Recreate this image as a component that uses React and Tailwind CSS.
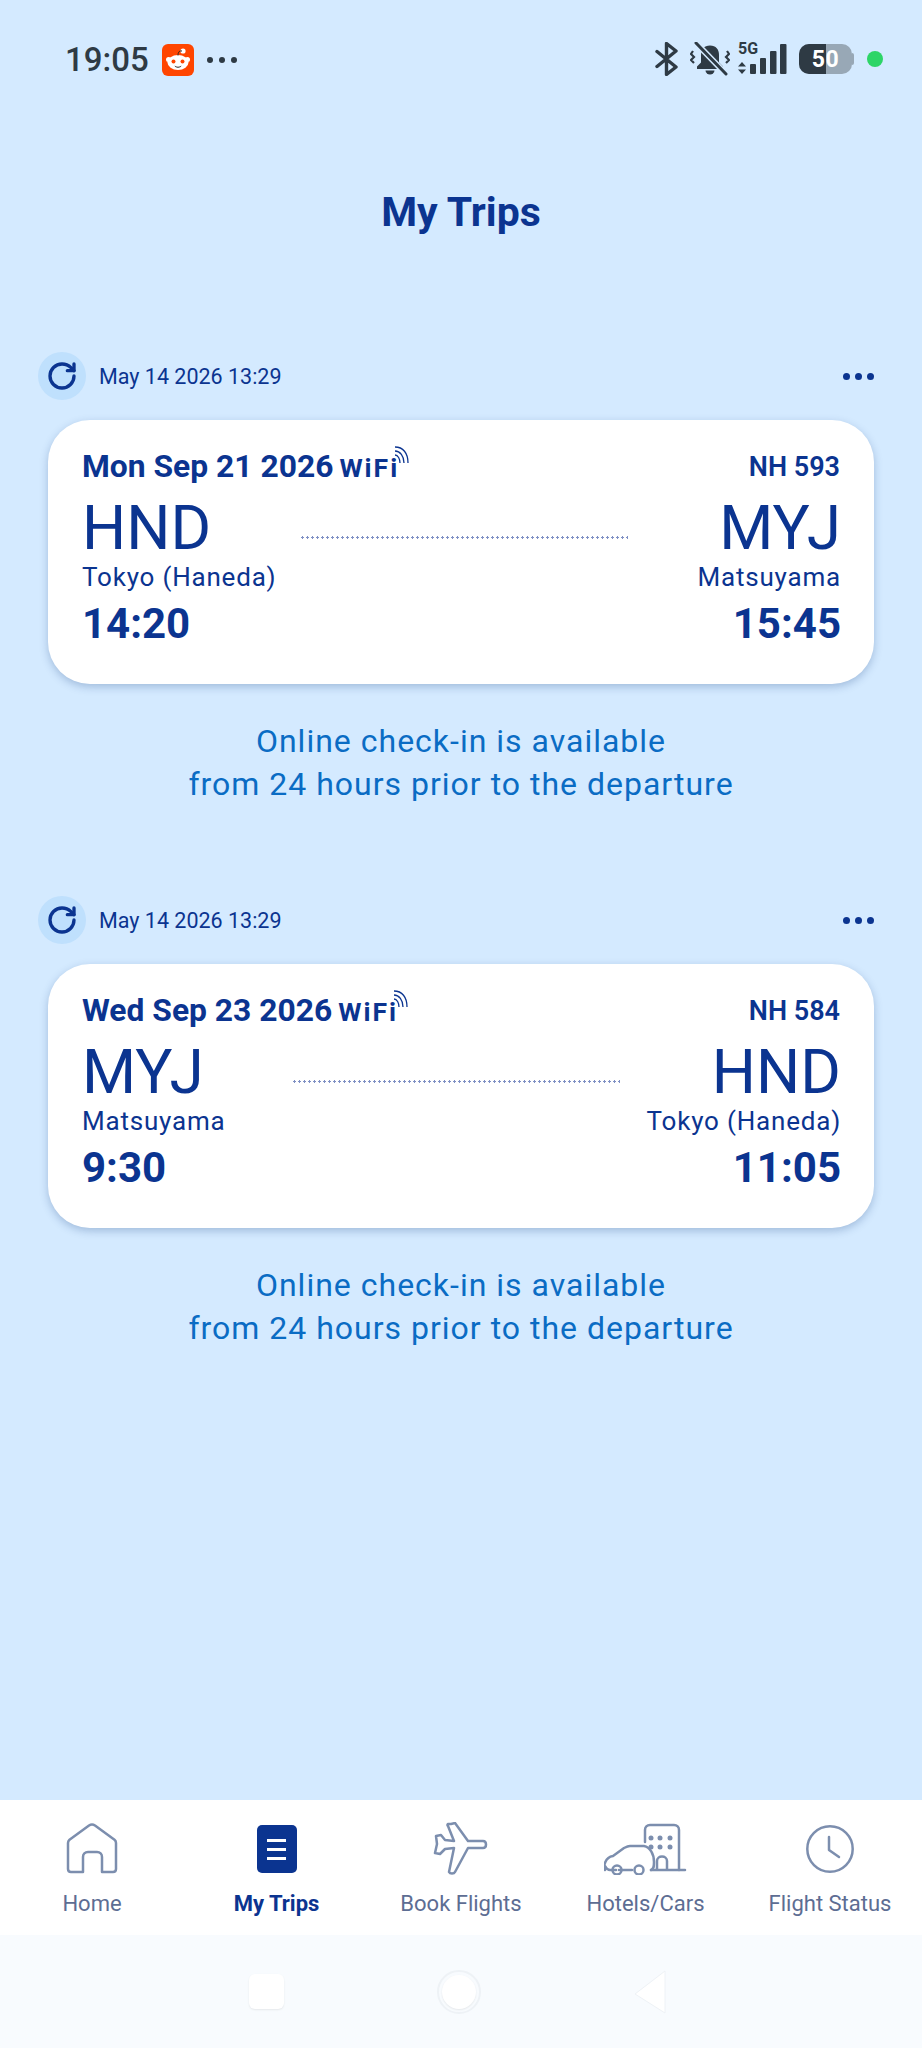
import { RotateCw } from 'lucide-react';

const TRIPS = [
  {
    date: 'Mon Sep 21 2026', flight: 'NH 593',
    from: 'HND', fromCity: 'Tokyo (Haneda)', dep: '14:20',
    to: 'MYJ', toCity: 'Matsuyama', arr: '15:45', lineClass: 'ml-[24px]',
  },
  {
    date: 'Wed Sep 23 2026', flight: 'NH 584',
    from: 'MYJ', fromCity: 'Matsuyama', dep: '9:30',
    to: 'HND', toCity: 'Tokyo (Haneda)', arr: '11:05', lineClass: 'ml-[66px]',
  },
];

const RedditIcon = () => (
  <svg width="32" height="32" viewBox="0 0 32 32">
    <rect width="32" height="32" rx="6" fill="#ff4500" />
    <ellipse cx="16" cy="18.500" rx="10.500" ry="7.500" fill="#fff" />
    <circle cx="6.500" cy="15.500" r="2.500" fill="#fff" />
    <circle cx="25.500" cy="15.500" r="2.500" fill="#fff" />
    <circle cx="21" cy="7" r="2.600" fill="#fff" />
    <path d="M16 11.500c0-3 1-5 4-4.500" stroke="#222" strokeWidth="1" fill="none" />
    <circle cx="11.500" cy="17.500" r="2" fill="#ff4500" />
    <circle cx="20.500" cy="17.500" r="2" fill="#ff4500" />
    <path d="M12.500 21.500c2 1.600 5 1.600 7 0-1 3-6 3-7 0z" fill="#222" />
  </svg>
);

const StatusIcons = () => (
  <div className="mb-[4px] flex items-center">
    <svg width="24" height="34" viewBox="0 0 24 34" fill="none" stroke="#2e3a44" strokeWidth="3.400" strokeLinecap="round" strokeLinejoin="round">
      <path d="M2 9.500l19 15.500-9.500 7.500V1.500L21 9 2 24.500" />
    </svg>
    <svg className="ml-[11px]" width="40" height="34" viewBox="0 0 40 34">
      <path d="M20 3.500c-6 0-9 4-9 9.500v7.500l-4 4v2.500h26v-2.500l-4-4V13c0-5.500-3-9.500-9-9.500z" fill="#2e3a44" />
      <path d="M15.500 28.500h9a4.500 4 0 0 1-9 0z" fill="#2e3a44" />
      <path d="M6 1l30 31" stroke="#d4eaff" strokeWidth="6" />
      <path d="M6 1l30 31" stroke="#2e3a44" strokeWidth="3" strokeLinecap="round" />
      <path d="M3 9l-2 3 3 3-3 3 3 3M37 9l2 3-3 3 3 3-3 3" stroke="#2e3a44" strokeWidth="2.200" fill="none" />
    </svg>
    <div className="relative ml-[8px] h-[32px] w-[49px]">
      <span className="absolute left-0 top-[-1px] text-[16px] font-bold leading-[14px] text-[#2e3a44]">5G</span>
      <svg className="absolute inset-0" width="49" height="32" viewBox="0 0 49 32" fill="#2e3a44">
        <path d="M4 19l4 4.500H0zM4 31l-4-4.500h8z" />
        <rect x="12" y="21" width="6" height="10" rx="1" />
        <rect x="22" y="15" width="6" height="16" rx="1" />
        <rect x="32" y="8" width="6.500" height="23" rx="1" />
        <rect x="42" y="1" width="6.500" height="30" rx="1" />
      </svg>
    </div>
    <div className="relative ml-[12px] flex h-[30px] w-[53px] items-center justify-center overflow-hidden rounded-[10px] bg-[#98a8b6]">
      <div className="absolute inset-y-0 left-0 w-[27px] bg-[#2e3a44]" />
      <span className="relative text-[23px] font-bold leading-none tracking-[0.5px] text-white">50</span>
    </div>
    <div className="h-[12px] w-[2px] rounded-r-sm bg-[#98a8b6]" />
    <div className="ml-[13px] h-4 w-4 rounded-full bg-[#2dd567]" />
  </div>
);

const TripCard = ({ trip }) => (
  <div>
    <div className="flex h-12 items-center pl-[38px] pr-12">
      <div className="flex h-12 w-12 items-center justify-center rounded-full bg-[#bfe0fd]">
        <RotateCw size={32} strokeWidth={2.500} className="text-[#0b3490]" />
      </div>
      <span className="ml-[13px] mt-[3px] text-[21.500px] text-[#0b3490]">May 14 2026 13:29</span>
      <div className="ml-auto flex gap-[5px]">
        <div className="h-[7px] w-[7px] rounded-full bg-[#0b3490]" />
        <div className="h-[7px] w-[7px] rounded-full bg-[#0b3490]" />
        <div className="h-[7px] w-[7px] rounded-full bg-[#0b3490]" />
      </div>
    </div>
    <div className="mx-12 mt-5 h-[264px] rounded-[42px] bg-white px-[34px] pt-[31px] text-[#0b3490] shadow-[0_3px_8px_rgba(30,70,130,0.28)]">
      <div className="flex h-[32px] items-center justify-between">
        <div className="flex items-baseline">
          <span className="text-[31.800px] font-bold leading-[32px]">{trip.date}</span>
          <span className="relative ml-[6px] text-[26.500px] font-bold leading-[32px] tracking-[2px]">
            WiFi
            <svg className="absolute -right-[10px] -top-[6px]" width="15" height="18" viewBox="0 0 15 18" fill="none" stroke="#0b3490" strokeWidth="1.300">
              <path d="M1 1c8 0 13 6 13 16M1 5c5 0 9 5 9 12M1 9c3 0 5 4 5 8" />
            </svg>
          </span>
        </div>
        <span className="text-[27px] font-semibold">{trip.flight}</span>
      </div>
      <div className="mt-[11px] flex items-start">
        <div className="flex flex-col">
          <span className="text-[62px] leading-[68px]">{trip.from}</span>
          <span className="text-[26px] leading-[30px] tracking-[0.800px]">{trip.fromCity}</span>
          <span className="mt-[8px] text-[42px] font-bold leading-[48px]">{trip.dep}</span>
        </div>
        <div className={`mt-[42px] h-[3px] w-[328px] shrink-0 bg-[radial-gradient(circle,#7f90c4_1px,transparent_1.300px)] bg-[length:5px_3px] ${trip.lineClass}`} />
        <div className="-mr-[1px] flex flex-1 flex-col items-end">
          <span className="text-[62px] leading-[68px]">{trip.to}</span>
          <span className="text-[26px] leading-[30px] tracking-[0.800px]">{trip.toCity}</span>
          <span className="mt-[8px] text-[42px] font-bold leading-[48px]">{trip.arr}</span>
        </div>
      </div>
    </div>
    <div className="mt-[36px] text-center text-[32px] leading-[43px] tracking-[1px] text-[#0a6cc4]">
      <p>Online check-in is available</p>
      <p>from 24 hours prior to the departure</p>
    </div>
  </div>
);

const NavItem = ({ icon, label, active }) => (
  <div className="flex w-[184px] flex-col items-center">
    <div className="flex h-[54px] items-center justify-center">{icon}</div>
    <span className={`mt-[13px] text-[22px] leading-[30px] ${active ? 'font-bold text-[#0b3490]' : 'text-[#5d6d93]'}`}>{label}</span>
  </div>
);

const navStroke = { fill: 'none', stroke: '#7c8eae', strokeWidth: 2.500, strokeLinecap: 'round', strokeLinejoin: 'round' };

const NAV = [
  {
    label: 'Home',
    icon: (
      <svg width="52" height="52" viewBox="0 0 52 52" {...navStroke}>
        <path d="M2 20c0-1.500.6-2.500 1.500-3.300L23 2.500c2-1.300 4-1.300 6 0l19.500 14.200c1 .8 1.500 1.800 1.500 3.300v26c0 2-1 3-3 3H36V34c0-3-2-5-5-5h-9c-3 0-5 2-5 5v15H5c-2 0-3-1-3-3z" />
      </svg>
    ),
  },
  {
    label: 'My Trips',
    active: true,
    icon: (
      <div className="flex h-12 w-10 flex-col items-center justify-center gap-[6px] rounded-[5px] bg-[#0b3490]">
        <div className="h-[3px] w-[19px] bg-white" />
        <div className="h-[3px] w-[19px] bg-white" />
        <div className="h-[3px] w-[19px] bg-white" />
      </div>
    ),
  },
  {
    label: 'Book Flights',
    icon: (
      <svg width="56" height="54" viewBox="0 0 56 54" {...navStroke}>
        <path d="M18 2l4-1 13 18h15c4 0 4 7 0 7H35L22 50c-1 2-5 2-6 0l5-24-9 1-5 5-5-1 2-9-1-8 5-1 4 5 9 1-6-15c-1-1-1-1 0-2z" />
      </svg>
    ),
  },
  {
    label: 'Hotels/Cars',
    icon: (
      <svg width="84" height="52" viewBox="0 0 84 52" {...navStroke}>
        <path d="M41 19V7c0-3 2-5 5-5h24c3 0 5 2 5 5v40" />
        <path d="M1 47c-2-3 0-13 8-14l11-8c2-1 4-2 6-2h14c6 1 10 8 10 16 0 4 0 7-3 8M15 47h13M12 47H6c-3 0-4-2-5-4" />
        <circle cx="13" cy="47" r="4.500" />
        <circle cx="35" cy="47" r="4.500" />
        <path d="M47 47h34M53 47v-9c0-6 10-6 10 0v9" />
        <g fill="#7c8eae" stroke="none">
          <circle cx="47" cy="15" r="2.500" /><circle cx="56" cy="15" r="2.500" /><circle cx="66" cy="15" r="2.500" />
          <circle cx="47" cy="24" r="2.500" /><circle cx="56" cy="24" r="2.500" /><circle cx="66" cy="24" r="2.500" />
        </g>
      </svg>
    ),
  },
  {
    label: 'Flight Status',
    icon: (
      <svg width="50" height="50" viewBox="0 0 50 50" {...navStroke}>
        <circle cx="25" cy="25" r="22.700" />
        <path d="M24 13v13l10 7" />
      </svg>
    ),
  },
];

export default function App() {
  return (
    <div className="flex h-[2048px] w-[922px] flex-col overflow-hidden bg-[#d4eaff] font-['Roboto',sans-serif]">
      <div className="flex h-[80px] shrink-0 items-end justify-between pl-[65px] pr-[39px]">
        <div className="flex items-center">
          <span className="text-[33px] font-medium leading-[40px] text-[#2e3a44]">19:05</span>
          <div className="ml-[13px]"><RedditIcon /></div>
          <div className="ml-[13px] flex gap-[6px]">
            <div className="h-[6px] w-[6px] rounded-full bg-[#2e3a44]" />
            <div className="h-[6px] w-[6px] rounded-full bg-[#2e3a44]" />
            <div className="h-[6px] w-[6px] rounded-full bg-[#2e3a44]" />
          </div>
        </div>
        <StatusIcons />
      </div>
      <h1 className="mt-[108px] text-center text-[41px] font-bold leading-[48px] text-[#0b3490]">My Trips</h1>
      <div className="mt-[116px] flex flex-col gap-[90px]">
        {TRIPS.map((trip) => <TripCard key={trip.flight} trip={trip} />)}
      </div>
      <div className="mt-auto flex h-[135px] shrink-0 justify-between bg-white pt-[22px]">
        {NAV.map((item) => <NavItem key={item.label} {...item} />)}
      </div>
      <div className="flex h-[113px] shrink-0 items-center justify-center gap-[153px] bg-[#f8fbfe] pr-[7px]">
        <div className="h-[35px] w-[35px] rounded-[6px] bg-white shadow-[0_1px_2px_rgba(0,0,0,0.08)]" />
        <div className="flex h-[44px] w-[44px] items-center justify-center rounded-full border-2 border-[#eef2f6]">
          <div className="h-[34px] w-[34px] rounded-full bg-white shadow-[0_1px_2px_rgba(0,0,0,0.08)]" />
        </div>
        <svg width="32" height="44" viewBox="0 0 32 44"><path d="M31 1v42L1 24z" fill="#fff" stroke="#eef2f6" /></svg>
      </div>
    </div>
  );
}
